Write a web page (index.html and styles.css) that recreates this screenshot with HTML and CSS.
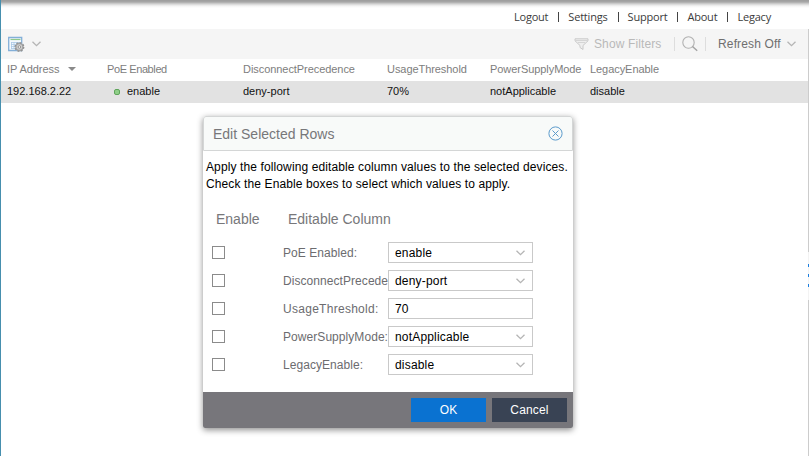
FILE: index.html
```html
<!DOCTYPE html>
<html lang="en">
<head>
<meta charset="utf-8">
<title>PoE Devices</title>
<link rel="stylesheet" href="styles.css">
</head>
<body>
<div class="app">
  <nav class="topnav"><a>Logout</a><i></i><a>Settings</a><i></i><a>Support</a><i></i><a>About</a><i></i><a>Legacy</a></nav>
  <main class="panel">
    <div class="toolbar">
      <svg class="grid-icon" width="17" height="17" viewBox="0 0 17 17"><path d="M.7 1.5h13v13H.7z" fill="#f3f8fd" stroke="#83afd8" stroke-width="1.3"/><path d="M2.5 3.5h10" stroke="#8fc98a" stroke-width="1.2"/><path d="M3 6.5h9M3 8.5h9M3 10.5h8M3 12.5h6M3.5 6v7M6 6v7M8.5 6v7M11.500 6v5" stroke="#a9c8e5" stroke-width=".8"/><circle cx="11.400" cy="11" r="4.300" fill="#a5a5a5" stroke="#929292" stroke-width="1.400" stroke-dasharray="1.800 1.550"/><circle cx="11.400" cy="11" r="2.800" fill="#d0d0d0"/><circle cx="11.400" cy="11" r="1.300" fill="#f4f4f4" stroke="#858585" stroke-width=".8"/></svg>
      <svg class="chev chev-first" width="9" height="6" viewBox="0 0 9 6"><path d="M.5.7l4 4 4-4"/></svg>
      <span class="space"></span>
      <svg class="funnel" width="15" height="13" viewBox="0 0 15 13"><path d="M1 .8h13v2L9 7.500v4L6 9.500v-2L1 2.800z" fill="#eee" stroke="#c9c9c9"/><path d="M1 2.500h13M4 4.500h7" stroke="#d5d5d5"/></svg>
      <span class="filters">Show Filters</span>
      <span class="sep"></span>
      <svg class="search" width="16" height="16" viewBox="0 0 16 16"><circle cx="6.500" cy="6.500" r="5.700" fill="none" stroke="#b1b1b1" stroke-width="1.100"/><path d="M10.500 10.500l4.700 4.300" stroke="#a3a3a3" stroke-width="1.400"/></svg>
      <span class="sep"></span>
      <span class="refresh">Refresh Off</span>
      <svg class="chev" width="9" height="6" viewBox="0 0 9 6"><path d="M.5.7l4 4 4-4"/></svg>
    </div>
    <div class="row head"><span>IP Address<b class="sort"></b></span><span class="tight">PoE Enabled</span><span>DisconnectPrecedence</span><span>UsageThreshold</span><span>PowerSupplyMode</span><span>LegacyEnable</span></div>
    <div class="row data"><span>192.168.2.22</span><span class="status"><b class="dot"></b>enable</span><span>deny-port</span><span>70%</span><span>notApplicable</span><span>disable</span></div>
  </main>
  <div class="handle"><i></i><i></i><i></i></div>
</div>
<section class="dialog">
  <header><h1>Edit Selected Rows</h1><svg width="15" height="15" viewBox="0 0 15 15"><circle cx="7.500" cy="7.500" r="6.600"/><path d="M4.500 4.500l6 6M10.500 4.500l-6 6"/></svg></header>
  <div class="body">
    <p>Apply the following editable column values to the selected devices.<br>Check the Enable boxes to select which values to apply.</p>
    <div class="caption"><span>Enable</span><span>Editable Column</span></div>
    <div class="field"><span class="check"></span><label>PoE Enabled:</label><div class="input"><span>enable</span><svg class="chev" width="9" height="6" viewBox="0 0 9 6"><path d="M.5.7l4 4 4-4"/></svg></div></div>
    <div class="field"><span class="check"></span><label>DisconnectPrecedence:</label><div class="input"><span>deny-port</span><svg class="chev" width="9" height="6" viewBox="0 0 9 6"><path d="M.5.7l4 4 4-4"/></svg></div></div>
    <div class="field"><span class="check"></span><label class="wide">UsageThreshold:</label><div class="input"><span>70</span></div></div>
    <div class="field"><span class="check"></span><label>PowerSupplyMode:</label><div class="input"><span>notApplicable</span><svg class="chev" width="9" height="6" viewBox="0 0 9 6"><path d="M.5.7l4 4 4-4"/></svg></div></div>
    <div class="field"><span class="check"></span><label>LegacyEnable:</label><div class="input"><span>disable</span><svg class="chev" width="9" height="6" viewBox="0 0 9 6"><path d="M.5.7l4 4 4-4"/></svg></div></div>
  </div>
  <footer><button class="ok">OK</button><button>Cancel</button></footer>
</section>
</body>
</html>
```
FILE: styles.css
```css
* { box-sizing: border-box; }
body { margin: 0; font-family: "Liberation Sans", Arial, sans-serif; background: #fff; overflow: hidden; }
.app { position: relative; height: 456px; border-left: 1px solid #468fae; display: flex; flex-direction: column; }
.topnav { height: 29px; padding: 9px 38px 0 0; display: flex; justify-content: flex-end; align-items: flex-start; font: 11px/16px "Open Sans", sans-serif; letter-spacing: -.2px; color: #3b3b3b; background: linear-gradient(#9c9c9c 0, #a8a8a8 2px, #d4d4d4 4px, #f4f4f4 6px, #fff 8px); }
.topnav i { width: 1px; height: 10px; background: #444; margin: 3px 9px 0 10px; }
.panel { flex: 1; border-right: 1px solid #ccc; }
.toolbar { height: 30px; background: #f5f5f5; display: flex; align-items: center; padding: 0 12px 0 7px; font-size: 12px; }
.chev path { fill: none; stroke: #b5b5b5; stroke-width: 1.3; }
.chev-first { margin-left: 7px; }
.space { flex: 1; }
.funnel { margin-right: 5px; }
.filters { color: #b9b9b9; letter-spacing: .12px; width: 80px; }
.sep { width: 1px; height: 14px; background: #ddd; }
.search { margin: 0 7px; }
.refresh { color: #6f6f6f; margin: 0 5px 0 12px; letter-spacing: .15px; width: 64px; white-space: nowrap; }
.row { height: 22px; display: grid; grid-template-columns: 100px 136px 144px 103px 100px 1fr; padding-left: 6px; font-size: 11px; line-height: 21px; white-space: nowrap; }
.head { color: #7d7d7d; letter-spacing: -.06px; }
.tight { letter-spacing: -.4px; }
.data { background: #e2e2e2; color: #111; }
.sort { display: inline-block; margin-left: 9px; border: 4px solid transparent; border-top: 4px solid #8a8a8a; border-bottom: 0; vertical-align: 2px; }
.dot { display: inline-block; width: 6px; height: 6px; border: 1px solid #5fa45b; background: #8fce88; border-radius: 2px; margin: 0 7px 0 7px; }
.handle { position: absolute; right: 0; top: 252px; width: 1px; height: 48px; background: #f3f3f3; padding-top: 12px; display: flex; flex-direction: column; gap: 7px; }
.handle i { width: 1px; height: 3px; background: #1c7fe0; }
.dialog { position: absolute; left: 203px; top: 116px; width: 370px; height: 312px; background: #fff; border-radius: 3px 3px 2px 2px; box-shadow: 0 2px 6px rgba(0,0,0,.45); display: flex; flex-direction: column; }
.dialog header { height: 35px; border: 1px solid #d4d6d6; border-radius: 3px 3px 0 0; background: #f8faf9; display: flex; align-items: center; justify-content: space-between; padding: 0 9px; }
h1 { margin: 0; font-size: 14px; font-weight: 400; color: #77777a; }
header svg { fill: none; stroke: #5c9bcb; stroke-width: 1; }
.body { flex: 1; }
p { margin: 8px 0 0 3px; font-size: 12px; line-height: 17px; white-space: nowrap; color: #000; letter-spacing: .115px; }
.caption { display: grid; grid-template-columns: 72px 1fr; padding-left: 13px; margin-top: 17px; font-size: 14px; line-height: 18px; color: #77777a; }
.field { display: grid; grid-template-columns: 71px 105px 145px; align-items: center; padding-left: 9px; height: 21px; margin-top: 7px; font-size: 12px; letter-spacing: .06px; }
.caption + .field { margin-top: 14px; }
.check { width: 13px; height: 13px; border: 1px solid #8b8b8b; }
label { color: #6c6c6f; white-space: nowrap; overflow: hidden; line-height: 19px; padding-top: 2px; }
.wide { letter-spacing: .28px; }
.input { height: 21px; border: 1px solid #c9c9c9; background: #fff; display: flex; align-items: center; justify-content: space-between; padding: 0 7px 0 6px; line-height: 17px; letter-spacing: .18px; color: #000; }
.input span { padding-top: 2px; }
footer { height: 36px; background: #77767b; border-radius: 0 0 2px 2px; padding: 6px; display: flex; justify-content: flex-end; gap: 6px; }
button { width: 75px; height: 24px; padding: 0; border: 0; background: #394354; color: #fff; font: 12px/24px "Liberation Sans", Arial, sans-serif; letter-spacing: .15px; }
.ok { background: #0a72d1; }
```
